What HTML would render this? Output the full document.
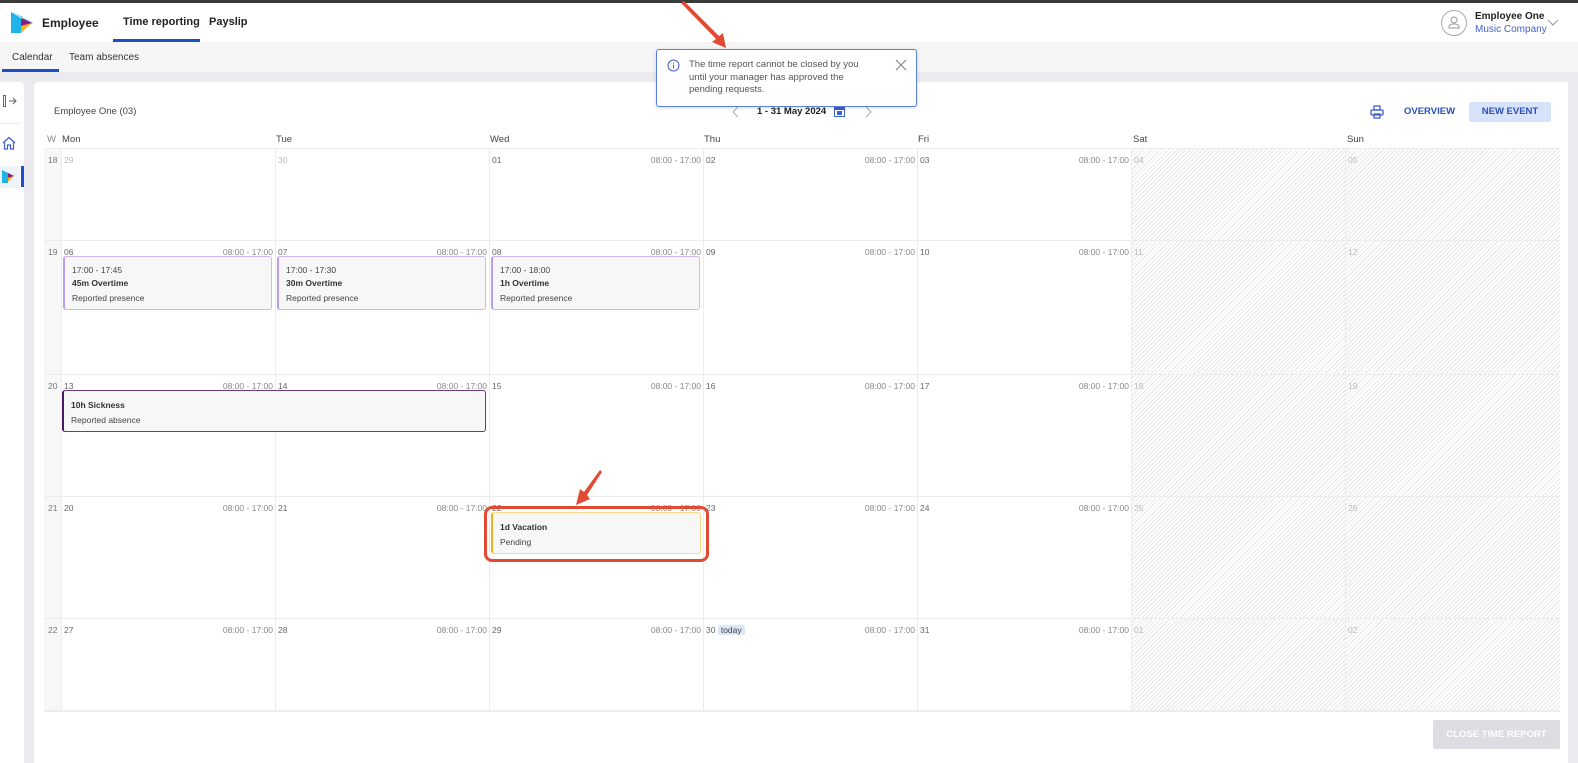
<!DOCTYPE html>
<html><head><meta charset="utf-8"><style>
*{margin:0;padding:0;box-sizing:border-box}
body{width:1578px;height:763px;overflow:hidden;background:#ebebef;font-family:"Liberation Sans",Arial,sans-serif;color:#333;position:relative}
.a{position:absolute}
.top{left:0;top:0;width:1578px;height:3px;background:#3a3a3a}
.hdr{left:0;top:3px;width:1578px;height:39px;background:#fff}
.sub{left:0;top:42px;width:1578px;height:30px;background:#f6f6f7}
.side{left:0;top:82px;width:24px;height:681px;background:#fff;border-radius:0 4px 0 0}
.main{left:34px;top:82px;width:1534px;height:681px;background:#fff;border-radius:4px 0 0 0}
.grid{left:44px;top:148px;display:grid;grid-template-columns:17px repeat(6,214px) 215px;grid-template-rows:92px 134px 122px 122px 92px;border-top:1px solid #ececef;border-bottom:1px solid #ececef}
.grid>div{border-left:1px solid #ececef;border-bottom:1px solid #ececef;position:relative;font-size:8.5px;color:#666}
.grid>div.w{background:#f7f7f7;border-left:none;color:#777;padding:6px 0 0 4px}
.grid>div.we{background:repeating-linear-gradient(135deg,#fff 0 2px,#e6e6ea 2px 3px)}
.d{position:absolute;left:2px;top:6px}
.o{color:#bbb}
.t{position:absolute;right:2px;top:6px;color:#888}
.ev{position:absolute;background:#f7f7f7;border-radius:3px;font-size:8.5px;color:#444;padding:0 7px}
.ev b{display:block;font-weight:bold;color:#333}
.dh{top:134px;font-size:9.5px;color:#444}
</style></head><body>
<div class="a top"></div>
<div class="a hdr"></div>
<svg class="a" style="left:11px;top:12px" width="22" height="22" viewBox="0 0 22 22"><polygon points="0,0 10,6 10,21 0,21" fill="#1fb4e8"/><polygon points="0,0 22,11 12,16 12,5" fill="#1fb4e8"/><polygon points="10,6 21,11 10,14" fill="#8a1f7f"/><polygon points="10,14 21,11 10,21" fill="#f7b21a"/></svg>
<div class="a" style="left:42px;top:16px;font-size:12px;font-weight:bold;color:#222">Employee</div>
<div class="a" style="left:123px;top:16px;font-size:11px;font-weight:bold;color:#222">Time reporting</div>
<div class="a" style="left:113px;top:39px;width:87px;height:3px;background:#1a4fc6"></div>
<div class="a" style="left:209px;top:16px;font-size:11px;font-weight:bold;color:#222">Payslip</div>
<div class="a" style="left:1441px;top:10px;width:26px;height:26px;border:1px solid #aaa;border-radius:50%"></div>
<svg class="a" style="left:1447px;top:15px" width="14" height="14" viewBox="0 0 14 14" fill="none" stroke="#999"><circle cx="7" cy="5" r="3"/><path d="M2 13v-1c0-2 2-3 5-3s5 1 5 3v1z"/></svg>
<div class="a" style="left:1475px;top:11px;font-size:10px;font-weight:bold;color:#222">Employee One</div>
<div class="a" style="left:1475px;top:24px;font-size:10px;color:#3f5fd4">Music Company</div>
<svg class="a" style="left:1547px;top:19px" width="12" height="8"><path d="M1 1l5 5 5-5" stroke="#999" fill="none"/></svg>
<div class="a sub"></div>
<div class="a" style="left:12px;top:52px;font-size:10px;color:#333">Calendar</div>
<div class="a" style="left:2px;top:69px;width:57px;height:3px;background:#1a4fc6"></div>
<div class="a" style="left:69px;top:52px;font-size:10px;color:#333">Team absences</div>
<div class="a side"></div>
<svg class="a" style="left:2px;top:94px" width="16" height="14" fill="none" stroke="#666"><rect x="1.5" y="1.5" width="2" height="11"/><path d="M7 7h7M11 4l3 3-3 3"/></svg>
<div class="a" style="left:0;top:123px;width:19px;height:1px;background:#e4e4e8"></div>
<svg class="a" style="left:2px;top:136px" width="14" height="14" fill="none" stroke="#3f5fd4" stroke-width="1.2"><path d="M1 7L7 1.5 13 7M2.5 5.5V13h3V9h3v4h3V5.5"/></svg>
<div class="a" style="left:0;top:166px;width:20px;height:22px;background:#eef2fb"></div>
<svg class="a" style="left:2px;top:170px" width="13" height="13"><polygon points="0,0 6,3 6,13 0,13" fill="#1fb4e8"/><polygon points="0,0 12,6 6,9 6,3" fill="#1fb4e8"/><polygon points="6,3 12,6 6,8" fill="#8a1f7f"/><polygon points="6,8 12,6 6,12" fill="#f7b21a"/></svg>
<div class="a" style="left:21px;top:166px;width:3px;height:21px;background:#1a4fc6"></div>
<div class="a main"></div>
<div class="a" style="left:54px;top:106px;font-size:9.5px;color:#444">Employee One (03)</div>
<svg class="a" style="left:732px;top:106px" width="8" height="12"><path d="M6 1L1 6l5 5" stroke="#aaa" fill="none"/></svg>
<div class="a" style="left:757px;top:106px;font-size:9.5px;font-weight:bold;color:#222">1 - 31 May 2024</div>
<svg class="a" style="left:834px;top:106px" width="11" height="11"><rect x="0.5" y="1.5" width="10" height="9" fill="#fff" stroke="#3f5fd4"/><rect x="0" y="1" width="11" height="3" fill="#3f5fd4"/><rect x="3" y="5" width="5" height="4" fill="#3f5fd4"/></svg>
<svg class="a" style="left:864px;top:106px" width="8" height="12"><path d="M2 1l5 5-5 5" stroke="#aaa" fill="none"/></svg>
<svg class="a" style="left:1370px;top:105px" width="14" height="14" fill="none" stroke="#3f5fd4" stroke-width="1.3"><rect x="4" y="1" width="6" height="4"/><rect x="1" y="5" width="12" height="5" rx="1"/><rect x="4" y="9" width="6" height="4"/></svg>
<div class="a" style="left:1404px;top:106px;font-size:9.5px;font-weight:bold;color:#2a4fb8">OVERVIEW</div>
<div class="a" style="left:1469px;top:102px;width:82px;height:20px;background:#d6e3fb;border-radius:2px;font-size:9.5px;font-weight:bold;color:#2a4fb8;text-align:center;line-height:20px">NEW EVENT</div>
<div class="a dh" style="left:47px;color:#888">W</div>
<div class="a dh" style="left:62px">Mon</div><div class="a dh" style="left:276px">Tue</div><div class="a dh" style="left:490px">Wed</div><div class="a dh" style="left:704px">Thu</div><div class="a dh" style="left:918px">Fri</div><div class="a dh" style="left:1133px">Sat</div><div class="a dh" style="left:1347px">Sun</div>
<div class="a grid">
<div class="w">18</div><div><span class="d o">29</span></div><div><span class="d o">30</span></div><div><span class="d">01</span><span class="t">08:00 - 17:00</span></div><div><span class="d">02</span><span class="t">08:00 - 17:00</span></div><div><span class="d">03</span><span class="t">08:00 - 17:00</span></div><div class="we"><span class="d o">04</span></div><div class="we"><span class="d o">05</span></div>
<div class="w">19</div><div><span class="d">06</span><span class="t">08:00 - 17:00</span></div><div><span class="d">07</span><span class="t">08:00 - 17:00</span></div><div><span class="d">08</span><span class="t">08:00 - 17:00</span></div><div><span class="d">09</span><span class="t">08:00 - 17:00</span></div><div><span class="d">10</span><span class="t">08:00 - 17:00</span></div><div class="we"><span class="d o">11</span></div><div class="we"><span class="d o">12</span></div>
<div class="w">20</div><div><span class="d">13</span><span class="t">08:00 - 17:00</span></div><div><span class="d">14</span><span class="t">08:00 - 17:00</span></div><div><span class="d">15</span><span class="t">08:00 - 17:00</span></div><div><span class="d">16</span><span class="t">08:00 - 17:00</span></div><div><span class="d">17</span><span class="t">08:00 - 17:00</span></div><div class="we"><span class="d o">18</span></div><div class="we"><span class="d o">19</span></div>
<div class="w">21</div><div><span class="d">20</span><span class="t">08:00 - 17:00</span></div><div><span class="d">21</span><span class="t">08:00 - 17:00</span></div><div><span class="d">22</span><span class="t">08:00 - 17:00</span></div><div><span class="d">23</span><span class="t">08:00 - 17:00</span></div><div><span class="d">24</span><span class="t">08:00 - 17:00</span></div><div class="we"><span class="d o">25</span></div><div class="we"><span class="d o">26</span></div>
<div class="w">22</div><div><span class="d">27</span><span class="t">08:00 - 17:00</span></div><div><span class="d">28</span><span class="t">08:00 - 17:00</span></div><div><span class="d">29</span><span class="t">08:00 - 17:00</span></div><div><span class="d">30 <span style="background:#dde6f7;padding:0 3px;border-radius:2px;color:#444">today</span></span><span class="t">08:00 - 17:00</span></div><div><span class="d">31</span><span class="t">08:00 - 17:00</span></div><div class="we"><span class="d o">01</span></div><div class="we"><span class="d o">02</span></div>
</div>
<div class="a ev" style="left:63px;top:256px;width:209px;height:54px;border:1px solid #cdb8f2;border-left:2px solid #b89cf0;padding-top:7px;line-height:13px">17:00 - 17:45<b>45m Overtime</b><span style="line-height:17px">Reported presence</span></div>
<div class="a ev" style="left:277px;top:256px;width:209px;height:54px;border:1px solid #cdb8f2;border-left:2px solid #b89cf0;padding-top:7px;line-height:13px">17:00 - 17:30<b>30m Overtime</b><span style="line-height:17px">Reported presence</span></div>
<div class="a ev" style="left:491px;top:256px;width:209px;height:54px;border:1px solid #cdb8f2;border-left:2px solid #b89cf0;padding-top:7px;line-height:13px">17:00 - 18:00<b>1h Overtime</b><span style="line-height:17px">Reported presence</span></div>
<div class="a ev" style="left:62px;top:390px;width:424px;height:42px;border:1px solid #6b3b7f;border-left:2px solid #4a1a5f;padding-top:7px;line-height:15px"><b>10h Sickness</b>Reported absence</div>
<div class="a ev" style="left:491px;top:512px;width:210px;height:42px;border:1px solid #fbd88a;border-left:2px solid #f5b01f;padding-top:7px;line-height:15px"><b>1d Vacation</b>Pending</div>
<div class="a" style="left:484px;top:506px;width:225px;height:56px;border:3px solid #e34a33;border-radius:8px"></div>
<div class="a" style="left:1433px;top:720px;width:127px;height:29px;background:#dcdce1;border-radius:2px;font-size:9.5px;font-weight:bold;color:#fff;text-align:center;line-height:29px">CLOSE TIME REPORT</div>
<div class="a" style="left:656px;top:49px;width:261px;height:58px;background:#fff;border:1px solid #5b7fe0;border-radius:3px;box-shadow:0 1px 4px rgba(0,0,0,.15)"></div>
<svg class="a" style="left:667px;top:59px" width="13" height="13" fill="none" stroke="#3f5fd4"><circle cx="6.5" cy="6.5" r="5.5"/><path d="M6.5 5.5v4M6.5 3.5v1"/></svg>
<div class="a" style="left:689px;top:59px;font-size:9.5px;color:#555;line-height:12.5px;width:188px">The time report cannot be closed by you until your manager has approved the pending requests.</div>
<svg class="a" style="left:895px;top:59px" width="12" height="12" stroke="#888" stroke-width="1.2"><path d="M1 1l10 10M11 1L1 11"/></svg>
<svg class="a" style="left:0;top:0" width="1578" height="763"><path d="M681 3 L716 39 L712 42 L726 48 L723 33 L719 36 L684 1Z" fill="#e34a33"/><path d="M600 470 L584 492 L580 489 L576 505 L590 499 L587 495 L602 472Z" fill="#e34a33"/></svg>
</body></html>
